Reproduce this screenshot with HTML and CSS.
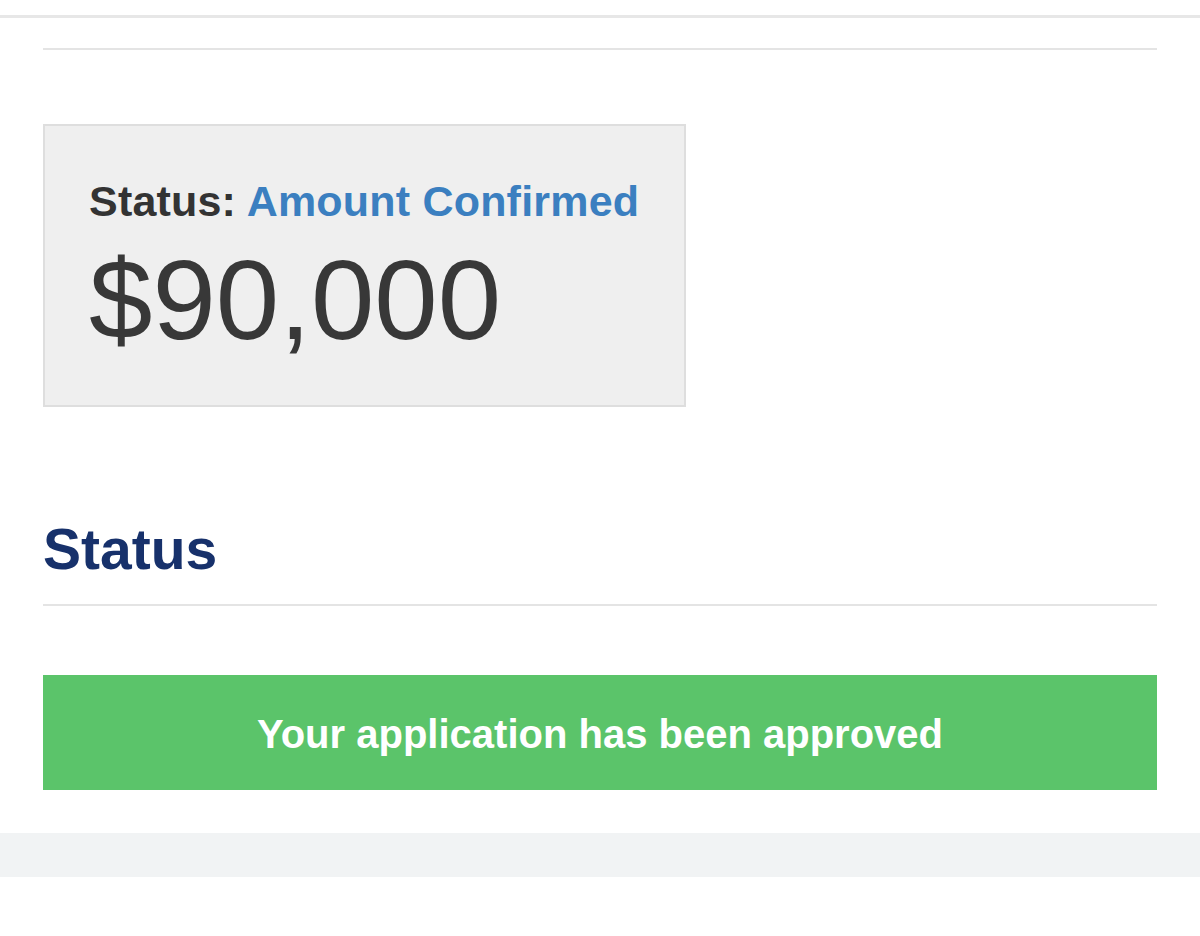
FILE: index.html
```html
<!DOCTYPE html>
<html lang="en">
<head>
<meta charset="utf-8">
<title>Application Status</title>
<link rel="stylesheet" href="styles.css">
</head>
<body>
<div class="topbar"></div>
<main class="content">
  <hr class="rule rule-top">
  <section class="amount-card">
    <p class="card-status">Status: <span class="card-status-value">Amount Confirmed</span></p>
    <p class="card-amount">$90,000</p>
  </section>
  <h2 class="section-title">Status</h2>
  <hr class="rule rule-section">
  <div class="alert-success">Your application has been approved</div>
</main>
<div class="band"></div>
</body>
</html>
```
FILE: styles.css
```css
html, body {
  margin: 0;
  padding: 0;
  background: #ffffff;
  font-family: "Liberation Sans", Arial, sans-serif;
  color: #333333;
}

.topbar {
  height: 15px;
  border-bottom: 3px solid #e7e7e7;
}

.content {
  padding: 0 43px;
}

.rule {
  border: 0;
  margin: 0;
  height: 2px;
  background: #e4e4e4;
}

.rule-top {
  margin-top: 30px;
}

.amount-card {
  margin-top: 74px;
  width: 643px;
  box-sizing: border-box;
  background: #efefef;
  border: 2px solid #dedede;
  padding: 54px 44px 48px;
}

.card-status {
  margin: 0;
  font-size: 43px;
  line-height: 43px;
  font-weight: bold;
  color: #333333;
  letter-spacing: 0.2px;
}

.card-status-value {
  color: #3b7fc0;
}

.card-amount {
  margin: 20px 0 0;
  font-size: 114px;
  line-height: 114px;
  font-weight: normal;
  color: #383838;
  letter-spacing: 0;
}

.section-title {
  margin: 114px 0 0;
  font-size: 57px;
  line-height: 56px;
  font-weight: bold;
  color: #17316b;
}

.rule-section {
  margin-top: 27px;
}

.alert-success {
  margin-top: 69px;
  background: #5bc46a;
  color: #ffffff;
  font-size: 40px;
  line-height: 40px;
  font-weight: bold;
  text-align: center;
  padding: 39px 0 36px;
}

.band {
  margin-top: 43px;
  height: 44px;
  background: #f1f3f4;
}
```
